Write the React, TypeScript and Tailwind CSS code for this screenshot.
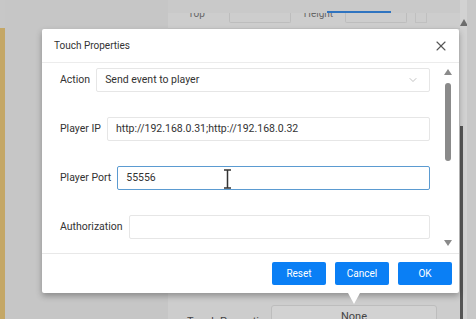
import { ChevronDown, X } from "lucide-react";

function Field({
  label,
  value,
  focused,
  select,
  children,
}: {
  label: string;
  value?: string;
  focused?: boolean;
  select?: boolean;
  children?: React.ReactNode;
}) {
  return (
    <div className="flex items-center h-[24px]">
      <span className="text-[10.5px] text-[#333] whitespace-nowrap mr-[6px]">{label}</span>
      <div
        className={
          "relative flex-1 h-[24px] flex items-center rounded-[2px] border bg-white text-[10.5px] text-[#333] " +
          (focused ? "border-[#5b9bd1] pl-[8px]" : "border-[#e6e6e6] pl-[8px]")
        }
      >
        <span>{value}</span>
        {select && (
          <ChevronDown className="absolute right-[10px] top-[5px] text-[#999]" size={12} strokeWidth={1.2} />
        )}
        {children}
      </div>
    </div>
  );
}

export default function App() {
  return (
    <div className="relative w-[476px] h-[319px] overflow-hidden bg-[#c7c7c7] font-['Roboto','Liberation_Sans',sans-serif]">
      {/* background page */}
      <div className="flex h-full">
        <div className="w-[168px] h-full flex">
          <div className="w-[5px] h-full pt-[28px]">
            <div className="h-full bg-[#c4a766]" />
          </div>
          <div className="flex-1 bg-[#c6c6c6]" />
        </div>
        <div className="w-[292px] h-full bg-[#cdcdcd] flex flex-col">
          <div className="h-[13px] bg-[#c9c9c9] relative z-10">
            <div className="absolute left-[159px] top-[11px] w-[64px] h-[2px] bg-[#2f74c0]" />
          </div>
          <div className="h-[16px] flex items-start text-[10px] text-[#666] border-b border-[#c4c4c4]">
            <span className="ml-[20px] mt-[-7px]">Top</span>
            <div className="ml-[24px] w-[62px] h-[10px] border border-t-0 border-[#bdbdbd] rounded-b-[2px]" />
            <span className="ml-[13px] mt-[-7px]">Height</span>
            <div className="ml-[12px] w-[62px] h-[10px] border border-t-0 border-[#bdbdbd] rounded-b-[2px]" />
            <div className="ml-[8px] w-[12px] h-[10px] border border-t-0 border-[#c0c0c0]" />
          </div>
          <div className="flex-1" />
          <div className="h-[12px] flex items-start text-[11px] text-[#444]">
            <span className="ml-[19px] w-[84px] shrink-0 mt-[7px] whitespace-nowrap">Touch Properties</span>
            <div className="mt-[-2px] w-[166px] h-[20px] border border-[#bdbdbd] rounded-[3px] bg-[#d2d2d2] flex justify-center pt-[3px]">
              None
            </div>
          </div>
        </div>
        <div className="w-[7px] h-full bg-[#d2d2d2] flex flex-col items-center pt-[19px]">
          <div className="w-0 h-0 border-l-[4px] border-r-[4px] border-b-[7px] border-l-transparent border-r-transparent border-b-[#6d6d6d]" />
          <div className="w-[3px] flex-1 mt-[100px] bg-[#555] self-start" />
        </div>
        <div className="flex-1 bg-[#c8c8c8]" />
      </div>

      {/* dialog */}
      <div className="absolute left-[42px] top-[29px] w-[417px] h-[264px] bg-white rounded-[2px] shadow-[0_3px_6px_rgba(0,0,0,0.3)] flex flex-col">
        <div className="h-[34px] flex items-center justify-between pl-[12px] pr-[10px] border-b border-[#ececec]">
          <span className="text-[10px] text-[#333]">Touch Properties</span>
          <X size={16} strokeWidth={1.6} className="text-[#555]" />
        </div>
        <div className="h-[191px] flex border-b border-[#e8e8e8]">
          <div className="flex-1 pl-[18px] pr-[11px] pt-[5px] flex flex-col gap-[25px]">
            <Field label="Action" value="Send event to player" select />
            <Field label="Player IP" value="http://192.168.0.31;http://192.168.0.32" />
            <Field label="Player Port" value="55556" focused>
              <svg className="absolute left-[105px] top-[2px]" width="9" height="20" viewBox="0 0 9 20">
                <path d="M1 1 H8 M4.5 1 V19 M1 19 H8" stroke="#333" strokeWidth="1.5" fill="none" />
              </svg>
            </Field>
            <Field label="Authorization" />
          </div>
          <div className="w-[14px] mr-[4px] flex flex-col items-center pt-[6px] pb-[7px]">
            <div className="w-0 h-0 border-l-[4px] border-r-[4px] border-b-[6px] border-l-transparent border-r-transparent border-b-[#8a8a8a]" />
            <div className="w-[6px] h-[78px] mt-[8px] rounded-full bg-[#8a8a8a]" />
            <div className="flex-1" />
            <div className="w-0 h-0 border-l-[4px] border-r-[4px] border-t-[6px] border-l-transparent border-r-transparent border-t-[#8a8a8a]" />
          </div>
        </div>
        <div className="flex-1 flex items-center justify-end gap-[9px] pr-[7px]">
          {["Reset", "Cancel", "OK"].map((b) => (
            <button
              key={b}
              className="w-[54px] h-[23px] rounded-[2px] bg-[#0a7ff5] text-white text-[10px]"
            >
              {b}
            </button>
          ))}
        </div>
        <div className="absolute left-[306px] top-[264px] w-0 h-0 border-l-[6px] border-r-[6px] border-t-[11px] border-l-transparent border-r-transparent border-t-white" />
      </div>
    </div>
  );
}
